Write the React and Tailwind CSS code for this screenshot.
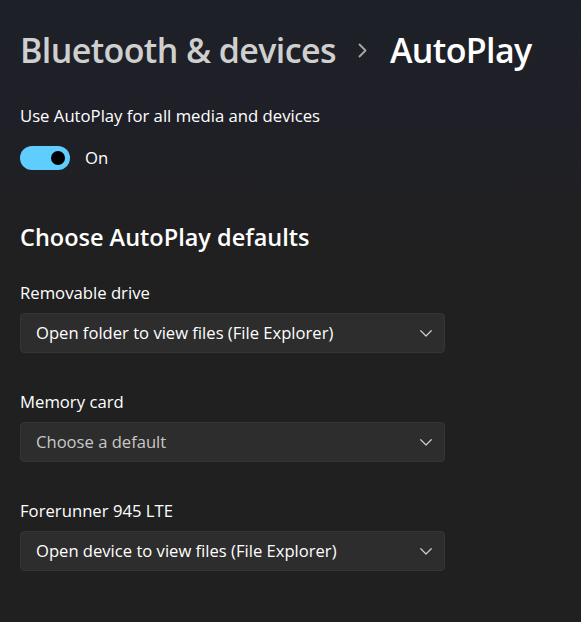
import React, { useState } from 'react'

const font = { fontFamily: '"Open Sans", "Noto Sans", sans-serif' }

function Chevron({ className }) {
  return (
    <svg className={className} width="12" height="7" viewBox="0 0 12 7" fill="none">
      <path d="M0.75 0.75 L6 6 L11.25 0.75" stroke="currentColor" strokeWidth="1.2" strokeLinecap="round" strokeLinejoin="round" />
    </svg>
  )
}

function Dropdown({ label, value, placeholder }) {
  return (
    <div className="flex flex-col">
      <div className="text-[16.7px] leading-[24px] text-white">{label}</div>
      <button className="mt-[8px] flex h-[40px] w-[425px] items-center justify-between rounded-[4px] border border-[#353535] bg-[#2d2d2d] pl-[15px] pr-[12px] text-left">
        <span className={`text-[16.6px] leading-[24px] ${placeholder ? 'text-[#c8c8c8]' : 'text-white'}`}>{value}</span>
        <Chevron className="text-[#cfcfcf]" />
      </button>
    </div>
  )
}

export default function App() {
  const [on, setOn] = useState(true)

  return (
    <div style={font} className="min-h-[622px] w-full bg-[linear-gradient(to_bottom,#1e2028_0px,#1f2027_120px,#202020_260px)] pl-[20px] pt-[28px]">
      {/* breadcrumb title */}
      <div className="flex items-center text-[34px] font-semibold leading-[44px] tracking-[-0.6px]">
        <span className="text-[#cfcfcf]">Bluetooth &amp; devices</span>
        <svg className="ml-[22px] mr-[23px] text-[#a8a8a8]" width="9" height="15" viewBox="0 0 9 15" fill="none">
          <path d="M1.5 1.5 L7.5 7.5 L1.5 13.5" stroke="currentColor" strokeWidth="1.8" strokeLinecap="round" strokeLinejoin="round" />
        </svg>
        <span className="text-white">AutoPlay</span>
      </div>

      <div className="mt-[32px] text-[16.7px] leading-[24px] text-white">Use AutoPlay for all media and devices</div>

      <div className="mt-[18px] flex items-center">
        <button
          onClick={() => setOn(!on)}
          className={`flex h-[24px] w-[50px] items-center rounded-full px-[5px] ${on ? 'justify-end bg-[#60cdff]' : 'justify-start border border-[#cfcfcf]'}`}
        >
          <span className={`block h-[14px] w-[14px] rounded-full ${on ? 'bg-black' : 'bg-[#cfcfcf]'}`} />
        </button>
        <span className="ml-[15px] text-[16.7px] leading-[24px] text-white">{on ? 'On' : 'Off'}</span>
      </div>

      <div className="mt-[52px] text-[23.5px] font-semibold leading-[30px] text-white">Choose AutoPlay defaults</div>

      <div className="mt-[29px] flex flex-col gap-[37px]">
        <Dropdown label="Removable drive" value="Open folder to view files (File Explorer)" />
        <Dropdown label="Memory card" value="Choose a default" placeholder />
        <Dropdown label="Forerunner 945 LTE" value="Open device to view files (File Explorer)" />
      </div>
    </div>
  )
}
